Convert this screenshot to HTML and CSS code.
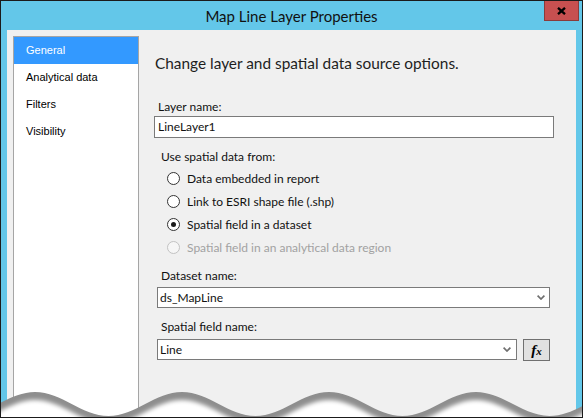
FILE: index.html
```html
<!DOCTYPE html>
<html>
<head>
<meta charset="utf-8">
<link rel="stylesheet" href="styles.css">
</head>
<body>
<div class="window">
  <div class="titlebar">
    <span></span>
    <div class="title">Map Line Layer Properties</div>
    <div class="close-wrap">
      <div class="close">
        <svg width="9" height="8" viewBox="0 0 9 8"><path d="M1 0.8 L8 7.2 M8 0.8 L1 7.2" stroke="#000" stroke-width="2.3" fill="none"/></svg>
      </div>
    </div>
  </div>
  <div class="client">
    <ul class="nav">
      <li class="nav-item active">General</li>
      <li class="nav-item">Analytical data</li>
      <li class="nav-item">Filters</li>
      <li class="nav-item">Visibility</li>
    </ul>
    <div class="main">
      <h1 class="heading">Change layer and spatial data source options.</h1>
      <div class="label layer-label">Layer name:</div>
      <div class="textbox">LineLayer1</div>
      <div class="source-group">
        <div class="label">Use spatial data from:</div>
        <div class="radios">
          <div class="radio-row"><span class="radio"></span><span>Data embedded in report</span></div>
          <div class="radio-row"><span class="radio"></span><span>Link to ESRI shape file (.shp)</span></div>
          <div class="radio-row"><span class="radio checked"></span><span>Spatial field in a dataset</span></div>
          <div class="radio-row disabled"><span class="radio"></span><span>Spatial field in an analytical data region</span></div>
        </div>
        <div class="label dataset-label">Dataset name:</div>
        <div class="combo">
          <span>ds_MapLine</span>
          <svg class="chev" width="8" height="5" viewBox="0 0 8 5"><path d="M0.6 0.6 L4 4 L7.4 0.6" stroke="#6f6f6f" stroke-width="1.7" fill="none"/></svg>
        </div>
        <div class="label field-label">Spatial field name:</div>
        <div class="combo-row">
          <div class="combo">
            <span>Line</span>
            <svg class="chev" width="8" height="5" viewBox="0 0 8 5"><path d="M0.6 0.6 L4 4 L7.4 0.6" stroke="#6f6f6f" stroke-width="1.7" fill="none"/></svg>
          </div>
          <div class="fx"><span class="fx-f">f</span><span class="fx-x">x</span></div>
        </div>
      </div>
    </div>
  </div>
  <svg class="torn" width="581" height="40" viewBox="0 0 581 40">
    <defs>
      <filter id="soft" filterUnits="userSpaceOnUse" x="-60" y="-20" width="720" height="100">
        <feGaussianBlur stdDeviation="2"/>
      </filter>
    </defs>
    <path fill="#8e8e8e" d="M -39.5 39 C -12.73 39, 7.23 15, 34 15 C 60.77 15, 80.73 39, 107.5 39 C 134.27 39, 154.23 15, 181 15 C 207.77 15, 227.73 39, 254.5 39 C 281.27 39, 301.23 15, 328 15 C 354.77 15, 374.73 39, 401.5 39 C 428.27 39, 448.23 15, 475 15 C 501.77 15, 521.73 39, 548.5 39 C 575.27 39, 595.23 15, 622 15 L 622 70 L -39.5 70 Z"/>
    <path fill="#ffffff" filter="url(#soft)" transform="translate(0,8)" d="M -39.5 39 C -12.73 39, 7.23 15, 34 15 C 60.77 15, 80.73 39, 107.5 39 C 134.27 39, 154.23 15, 181 15 C 207.77 15, 227.73 39, 254.5 39 C 281.27 39, 301.23 15, 328 15 C 354.77 15, 374.73 39, 401.5 39 C 428.27 39, 448.23 15, 475 15 C 501.77 15, 521.73 39, 548.5 39 C 575.27 39, 595.23 15, 622 15 L 622 70 L -39.5 70 Z"/>
  </svg>
</div>
</body>
</html>
```

FILE: styles.css
```css
* {
  box-sizing: border-box;
  margin: 0;
  padding: 0;
}

body {
  margin: 0;
  background: #ffffff;
}

.window {
  position: relative;
  width: 583px;
  height: 418px;
  border: 1px solid #1b1b1b;
  background: #63c7e9;
  display: flex;
  flex-direction: column;
  overflow: hidden;
  font-family: Lato, "Liberation Sans", sans-serif;
  color: #000;
}

.titlebar {
  height: 29px;
  flex: none;
  display: grid;
  grid-template-columns: 1fr auto 1fr;
}

.title {
  align-self: center;
  font-size: 15px;
  line-height: 20px;
  color: #111;
}

.close-wrap {
  display: flex;
  justify-content: flex-end;
  align-items: flex-start;
}

.close {
  width: 35px;
  height: 21px;
  margin-top: -1px;
  margin-right: 3px;
  background: #c75050;
  border: 1px solid #8a3b3b;
  display: flex;
  align-items: center;
  justify-content: center;
}

.client {
  flex: 1;
  margin: 0 6px;
  background: #f0f0f0;
  display: flex;
  padding: 6px 0 0 6px;
}

.nav {
  list-style: none;
  width: 126px;
  flex: none;
  background: #ffffff;
  border: 1px solid #a5a5a5;
  border-bottom: none;
  font-family: "Liberation Sans", Arial, sans-serif;
  font-size: 11px;
}

.nav-item {
  height: 27px;
  line-height: 27px;
  padding-left: 12px;
}

.nav-item.active {
  background: #3399ff;
  color: #ffffff;
}

.main {
  flex: 1;
  padding: 0 22px 0 15px;
  font-size: 12px;
  color: #111;
}

.heading {
  margin-top: 17px;
  padding-left: 1px;
  font-size: 15.4px;
  line-height: 20px;
  font-weight: normal;
  color: #1e1e1e;
}

.label {
  line-height: 16px;
  padding-left: 4px;
}

.layer-label {
  margin-top: 26px;
}

.textbox {
  margin-top: 1px;
  height: 22px;
  border: 1px solid #7a7a7a;
  background: #ffffff;
  padding-left: 3px;
  line-height: 20px;
}

.source-group {
  margin: 11px 4px 0 3px;
}

.radios {
  margin-top: 2px;
  padding-left: 10px;
}

.radio-row {
  height: 23px;
  display: flex;
  align-items: center;
  gap: 7px;
}

.radio {
  width: 13px;
  height: 13px;
  border-radius: 50%;
  border: 1px solid #333333;
  background: #ffffff;
  display: flex;
  align-items: center;
  justify-content: center;
}

.radio.checked::after {
  content: "";
  width: 5px;
  height: 5px;
  border-radius: 50%;
  background: #1a1a1a;
}

.radio-row.disabled {
  color: #a2a2a2;
}

.radio-row.disabled .radio {
  border-color: #c2c2c2;
  background: #f6f6f6;
}

.dataset-label {
  margin-top: 9px;
}

.combo {
  margin-top: 3px;
  height: 21px;
  border: 1px solid #7a7a7a;
  background: #ffffff;
  display: flex;
  align-items: center;
  justify-content: space-between;
  padding: 0 4px 0 2px;
}

.chev {
  display: block;
}

.field-label {
  margin-top: 11px;
}

.combo-row {
  margin-top: 4px;
  display: flex;
  gap: 6px;
}

.combo-row .combo {
  flex: 1;
  margin-top: 0;
  padding-right: 5px;
}

.fx {
  width: 27px;
  height: 22px;
  flex: none;
  border: 1px solid #707070;
  background: #e1e1e1;
  display: flex;
  align-items: center;
  justify-content: center;
  font-family: "Liberation Serif", "Times New Roman", serif;
  font-style: italic;
  font-weight: bold;
  color: #000;
}

.fx-f {
  font-size: 15px;
  line-height: 15px;
}

.fx-x {
  font-size: 11px;
  line-height: 11px;
  margin-top: 3px;
}

.torn {
  position: absolute;
  left: 0;
  bottom: 0;
  display: block;
}
```
